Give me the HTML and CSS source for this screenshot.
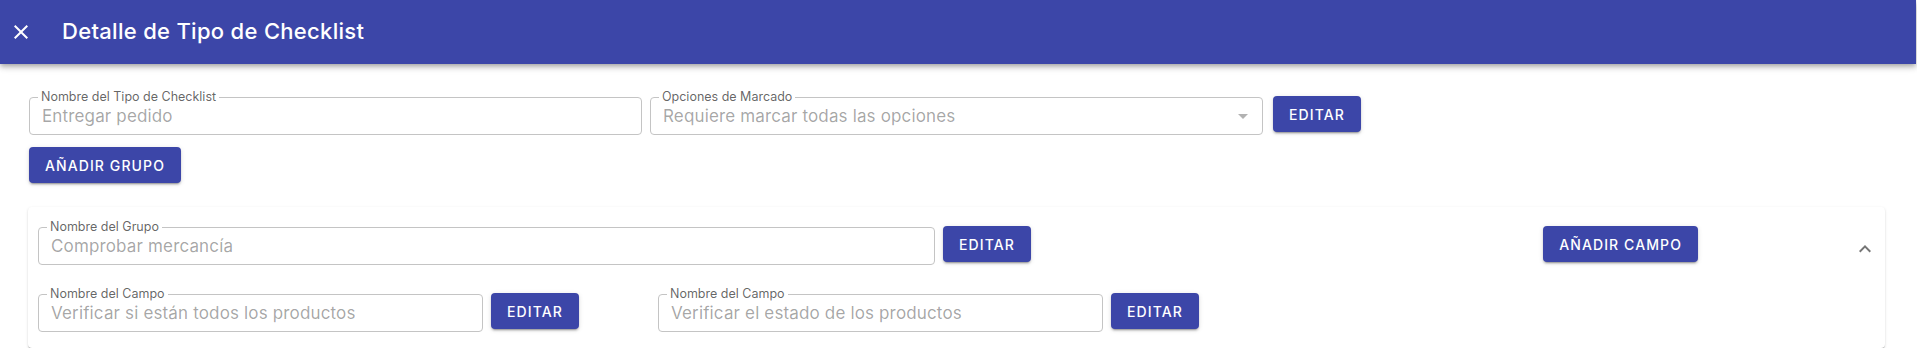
FILE: index.html
```html
<!DOCTYPE html>
<html lang="es">
<head>
<meta charset="utf-8">
<title>Detalle de Tipo de Checklist</title>
<link rel="stylesheet" href="styles.css">
</head>
<body>
<header class="appbar">
  <svg class="close-icon" viewBox="0 0 24 24" width="24" height="24"><path d="M19 6.41L17.59 5 12 10.59 6.41 5 5 6.41 10.59 12 5 17.59 6.41 19 12 13.41 17.59 19 19 17.59 13.41 12z" fill="#fff"/></svg>
  <h1 class="title">Detalle de Tipo de Checklist</h1>
</header>
<main class="content">
  <div class="row top-row">
    <fieldset class="field field-wide">
      <legend>Nombre del Tipo de Checklist</legend>
      <div class="value">Entregar pedido</div>
    </fieldset>
    <fieldset class="field field-wide field-select">
      <legend>Opciones de Marcado</legend>
      <div class="value select-value"><span>Requiere marcar todas las opciones</span><span class="arrow"></span></div>
    </fieldset>
    <button class="btn btn-edit-top">Editar</button>
  </div>
  <div class="row add-row">
    <button class="btn">Añadir grupo</button>
  </div>
  <section class="card">
    <div class="group-row">
      <fieldset class="field field-group">
        <legend>Nombre del Grupo</legend>
        <div class="value">Comprobar mercancía</div>
      </fieldset>
      <button class="btn btn-edit">Editar</button>
      <div class="spacer"></div>
      <button class="btn btn-edit">Añadir campo</button>
      <svg class="chevron" viewBox="0 0 24 24" width="24" height="24"><path d="M12 8l-6 6 1.41 1.41L12 10.83l4.59 4.58L18 14z" fill="#757575"/></svg>
    </div>
    <div class="fields-grid">
      <div class="campo">
        <fieldset class="field field-campo">
          <legend>Nombre del Campo</legend>
          <div class="value">Verificar si están todos los productos</div>
        </fieldset>
        <button class="btn btn-edit">Editar</button>
      </div>
      <div class="campo">
        <fieldset class="field field-campo">
          <legend>Nombre del Campo</legend>
          <div class="value">Verificar el estado de los productos</div>
        </fieldset>
        <button class="btn btn-edit">Editar</button>
      </div>
    </div>
  </section>
</main>
</body>
</html>
```
FILE: styles.css
```css
* { box-sizing: border-box; }
html, body { margin: 0; padding: 0; background: #fff; }
body { font-family: "Inter", "Noto Sans", sans-serif; color: rgba(0,0,0,.87); width: 1917px; }

.appbar {
  height: 64px;
  background: #3c46a8;
  display: flex;
  align-items: center;
  padding-left: 9px;
  box-shadow: 0 2px 4px -1px rgba(0,0,0,.2), 0 4px 5px 0 rgba(0,0,0,.14), 0 1px 10px 0 rgba(0,0,0,.12);
  position: relative;
  width: 1916px;
}
.close-icon { display: block; margin-top: -1px; }
.title {
  margin: -2px 0 0 29px;
  font-size: 22px;
  font-weight: 500;
  color: #fff;
  letter-spacing: 0.3px;
  line-height: 26px;
}

.content { padding: 27px 32px 0 28px; }
.row { display: flex; align-items: flex-start; }
.top-row { padding-left: 1px; }
.add-row { padding-left: 1px; margin-top: 12px; }

.field {
  margin: 0;
  padding: 1px 12px 6px 12px;
  border: 1px solid #c4c4c4;
  border-radius: 4px;
  min-width: 0;
}
.field legend {
  font-size: 12.5px;
  line-height: 12px;
  padding: 0 3px;
  margin-left: -4px;
  color: rgba(0,0,0,.62);
}
.value {
  font-size: 17px;
  line-height: 24px;
  letter-spacing: 0.15px;
  color: rgba(0,0,0,.36);
  white-space: nowrap;
}
.field-wide { width: 613px; }
.field-wide + .field-wide { margin-left: 8px; }
.select-value { display: flex; align-items: center; justify-content: space-between; padding-right: 2px; }
.arrow {
  width: 0; height: 0;
  border-left: 5px solid transparent;
  border-right: 5px solid transparent;
  border-top: 5px solid rgba(0,0,0,.3);
}

.btn {
  font-family: inherit;
  height: 36px;
  border: none;
  border-radius: 4px;
  background: #3c46a8;
  color: #fff;
  font-size: 14px;
  font-weight: 500;
  letter-spacing: 1.1px;
  text-transform: uppercase;
  padding: 0 16px;
  box-shadow: 0 3px 1px -2px rgba(0,0,0,.2), 0 2px 2px 0 rgba(0,0,0,.14), 0 1px 5px 0 rgba(0,0,0,.12);
  cursor: pointer;
}
.btn-edit-top { margin-left: 10px; margin-top: 5px; }
.btn-edit { margin-left: 8px; margin-top: 5px; }

.card {
  margin-top: 24px;
  background: #fff;
  border-radius: 4px;
  box-shadow: 0 2px 1px -1px rgba(0,0,0,.2), 0 1px 1px 0 rgba(0,0,0,.14), 0 1px 3px 0 rgba(0,0,0,.12);
  padding: 14px 8px 16px 10px;
}
.group-row { display: flex; align-items: flex-start; }
.field-group { width: 897px; }
.spacer { flex: 1; }
.chevron { display: block; margin: 16px 0 0 155px; }

.fields-grid {
  display: grid;
  grid-template-columns: repeat(3, 620px);
  margin-top: 23px;
}
.campo { display: flex; align-items: flex-start; }
.field-campo { width: 445px; }
```
